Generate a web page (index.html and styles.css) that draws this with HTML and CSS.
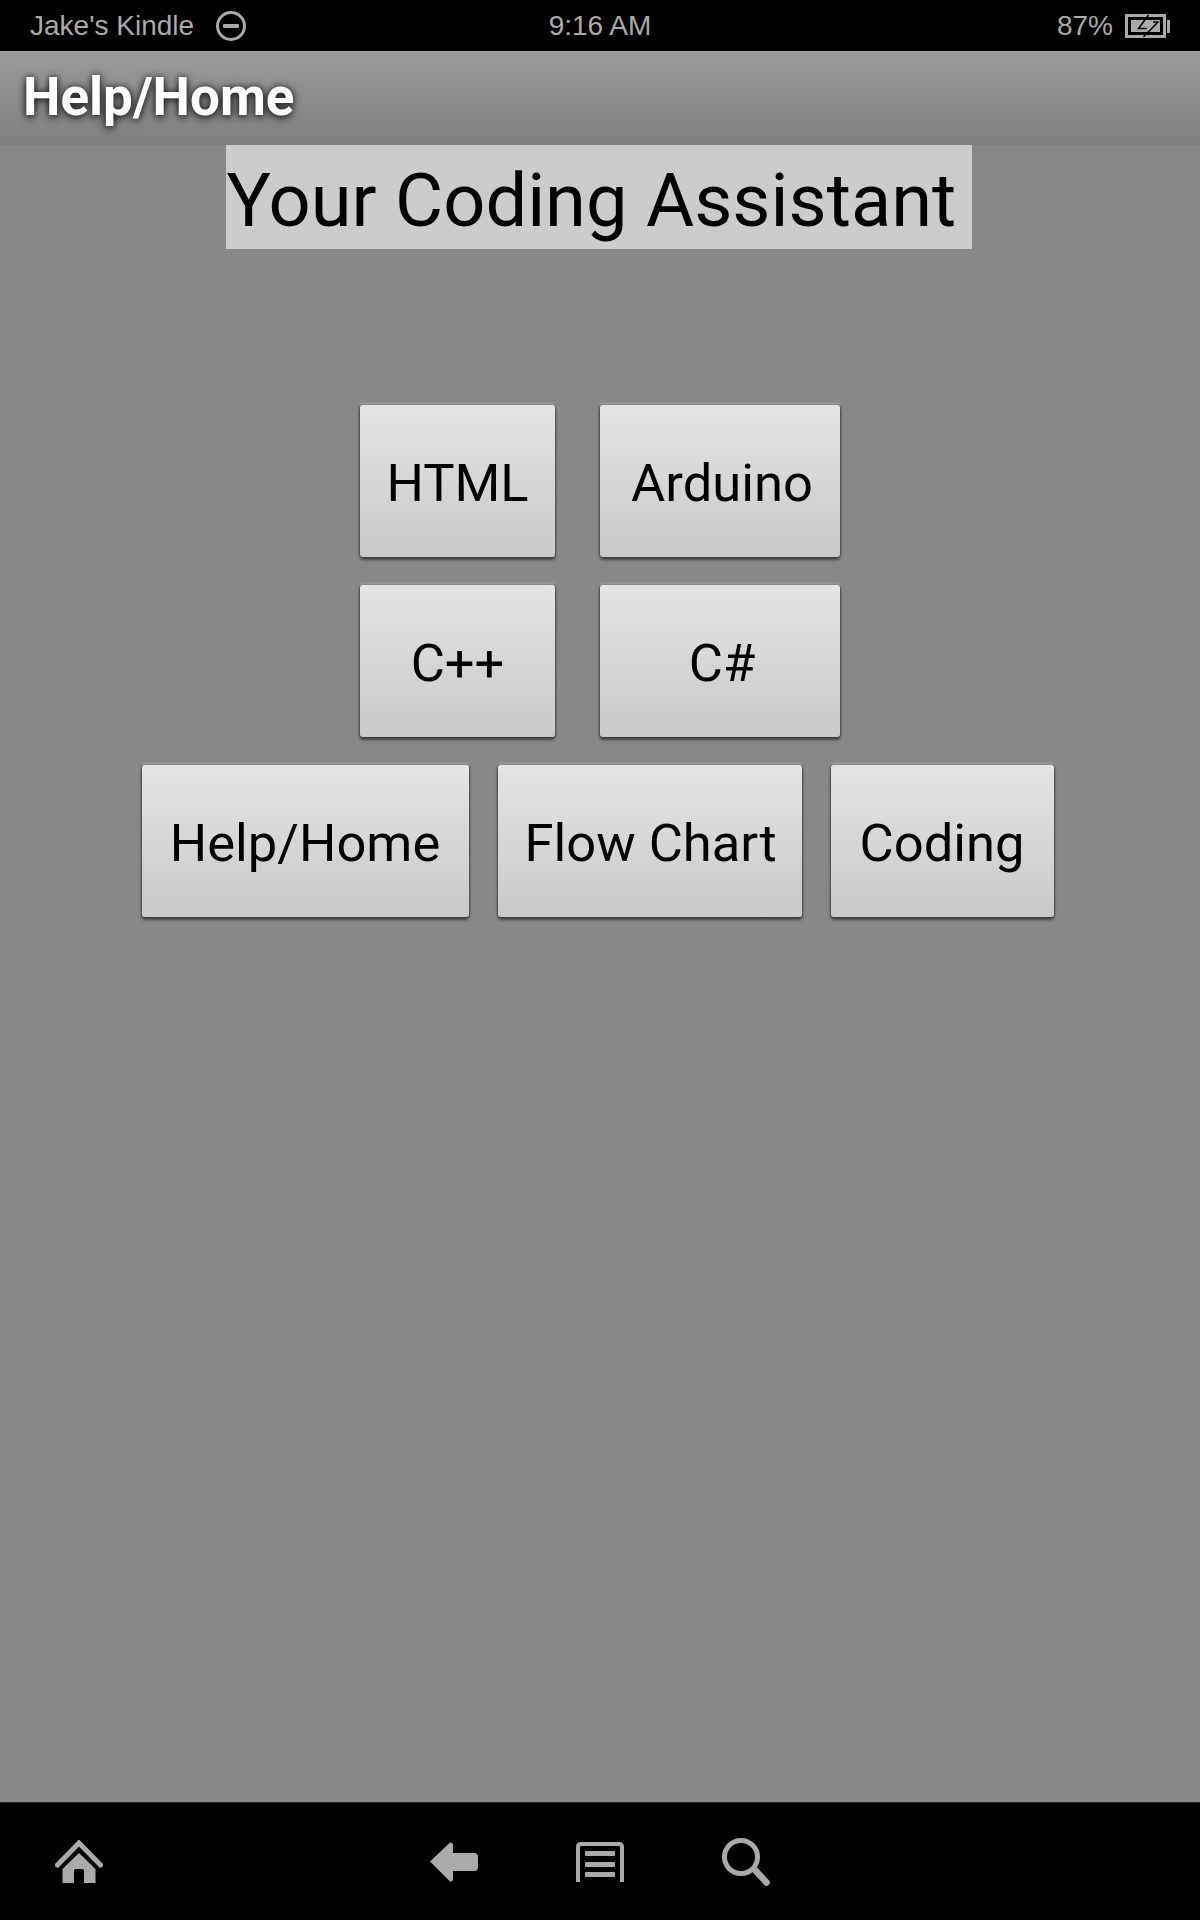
FILE: index.html
```html
<!DOCTYPE html>
<html lang="en">

<head>
    <meta charset="UTF-8">
    <meta name="viewport" content="width=device-width, initial-scale=1.0">
    <title>Your Coding Assistant</title>
    <link rel="stylesheet" href="styles.css">
</head>

<body>
    <div class="status-bar">
        <div class="status-left">
            <span>Jake's Kindle</span>
            <svg class="dnd-icon" viewBox="0 0 32 32" width="32" height="32">
                <circle cx="16" cy="16" r="13.5" fill="none" stroke="#aaa" stroke-width="3" />
                <rect x="8" y="14" width="16" height="4" rx="1" fill="#aaa" />
            </svg>
        </div>
        <div class="status-time">9:16 AM</div>
        <div class="status-right">
            <span>87%</span>
            <svg class="battery-icon" viewBox="0 0 45 24" width="45" height="24">
                <path d="M0 0H41V24H0Z M3 3V21H38V3Z" fill="#aaa" fill-rule="evenodd" />
                <rect x="42" y="6" width="3" height="13" fill="#aaa" />
                <rect x="6" y="6" width="29" height="12" fill="#aaa" />
                <path d="M23.5 1L13.5 14.5H22 M28 8H33L18.5 23" fill="none" stroke="#000" stroke-width="1.5" />
            </svg>
        </div>
    </div>

    <div class="app-bar">Help/Home</div>

    <div class="content">
        <h1 class="title">Your Coding Assistant</h1>
        <div class="buttons">
            <div class="button-row">
                <button class="btn btn-short">HTML</button>
                <button class="btn btn-long">Arduino</button>
            </div>
            <div class="button-row">
                <button class="btn btn-short">C++</button>
                <button class="btn btn-long">C#</button>
            </div>
            <div class="button-row button-row-wide">
                <button class="btn btn-help">Help/Home</button>
                <button class="btn btn-flow"><span class="btn-clip">Flow Chart</span></button>
                <button class="btn btn-coding">Coding</button>
            </div>
        </div>
    </div>

    <div class="nav-bar">
        <svg class="nav-home" viewBox="0 0 48 44" width="48" height="44">
            <path d="M2.5 25L24 3L45.5 25" fill="none" stroke="#aaa" stroke-width="5" stroke-linecap="round" />
            <path d="M24 13L40.5 29V43H29V31Q29 29 27 29H21Q19 29 19 31V43H7.5V29Z" fill="#aaa" />
        </svg>
        <div class="nav-group">
            <svg viewBox="0 0 48 40" width="48" height="40">
                <path d="M20 0.5Q23 0 23 3V11H44Q48 11 48 15V25Q48 29 44 29H23V37Q23 40 20 39.5L0 19.5Z" fill="#aaa" />
            </svg>
            <svg viewBox="0 0 48 40" width="48" height="40">
                <path d="M2 40V5Q2 2 5 2H43Q46 2 46 5V40" fill="none" stroke="#aaa" stroke-width="4" />
                <rect x="9" y="9" width="30" height="5" rx="1" fill="#aaa" />
                <rect x="9" y="20" width="30" height="5" rx="1" fill="#aaa" />
                <rect x="9" y="30" width="30" height="5" rx="1" fill="#aaa" />
            </svg>
            <svg viewBox="0 0 48 48" width="48" height="48">
                <circle cx="19" cy="19" r="16.5" fill="none" stroke="#aaa" stroke-width="5" />
                <path d="M32 31L44.5 44.5" fill="none" stroke="#aaa" stroke-width="6.5" stroke-linecap="round" />
            </svg>
        </div>
    </div>
</body>

</html>
```

FILE: styles.css
```css
html,
body {
    height: 100%;
}

body {
    margin: 0;
    display: flex;
    flex-direction: column;
    min-height: 1920px;
    background-color: #888;
    font-family: Roboto, 'Liberation Sans', sans-serif;
    color: #000;
    overflow: hidden;
}

.status-bar {
    height: 51px;
    background-color: #000;
    color: #aaa;
    font-family: 'Liberation Sans', sans-serif;
    font-size: 28px;
    display: grid;
    grid-template-columns: 1fr auto 1fr;
    align-items: center;
    padding: 0 30px;
}

.status-left {
    display: flex;
    align-items: center;
    gap: 21px;
}

.status-time {
    text-align: center;
}

.status-right {
    display: flex;
    justify-content: flex-end;
    align-items: center;
    gap: 12px;
}

.app-bar {
    height: 94px;
    box-sizing: border-box;
    padding: 15px 0 0 23px;
    background: linear-gradient(#9b9b9b, #7f7f7f);
    color: #fff;
    font-size: 53px;
    font-weight: 700;
    line-height: 62px;
    text-shadow: 0 2px 8px rgba(0, 0, 0, 0.8), 0 0 6px rgba(0, 0, 0, 0.5);
}

.content {
    flex: 1;
    display: flex;
    flex-direction: column;
    align-items: center;
}

.title {
    margin: 0 3px 0 0;
    height: 104px;
    width: 746px;
    box-sizing: border-box;
    padding-left: 1px;
    background-color: #ccc;
    font-size: 74px;
    font-weight: 400;
    line-height: 112px;
    white-space: nowrap;
}

.buttons {
    margin-top: 156px;
    display: flex;
    flex-direction: column;
    align-items: center;
    gap: 28px;
}

.button-row {
    display: flex;
    gap: 45px;
}

.button-row-wide {
    gap: 29px;
    margin-right: 5px;
}

.btn {
    height: 152px;
    padding: 4px 0 0;
    border: 0;
    border-radius: 3px;
    background: linear-gradient(#e4e4e4, #c9c9c9);
    box-shadow: -1px 0 2px rgba(0, 0, 0, 0.35), 1px 0 2px rgba(0, 0, 0, 0.35), 0 3px 3px rgba(0, 0, 0, 0.5), 0 -2px 2px rgba(255, 255, 255, 0.25);
    font-family: inherit;
    font-size: 52.5px;
    color: #000;
}

.btn-short {
    width: 195px;
}

.btn-long {
    width: 240px;
    padding-left: 4px;
}

.btn-help {
    width: 327px;
}

.btn-flow {
    width: 304px;
}

.btn-coding {
    width: 223px;
}

/* the label runs past its box on the device, last letter is cut */
.btn-clip {
    display: block;
    width: 250px;
    margin-left: 27px;
    overflow: hidden;
    white-space: nowrap;
    text-align: left;
}

.nav-bar {
    height: 118px;
    background-color: #000;
    border-top: 1px solid #222;
    box-sizing: border-box;
    display: flex;
    align-items: center;
    padding: 0 0 0 55px;
}

.nav-group {
    display: flex;
    align-items: center;
    gap: 98px;
    margin-left: 327px;
}
```
